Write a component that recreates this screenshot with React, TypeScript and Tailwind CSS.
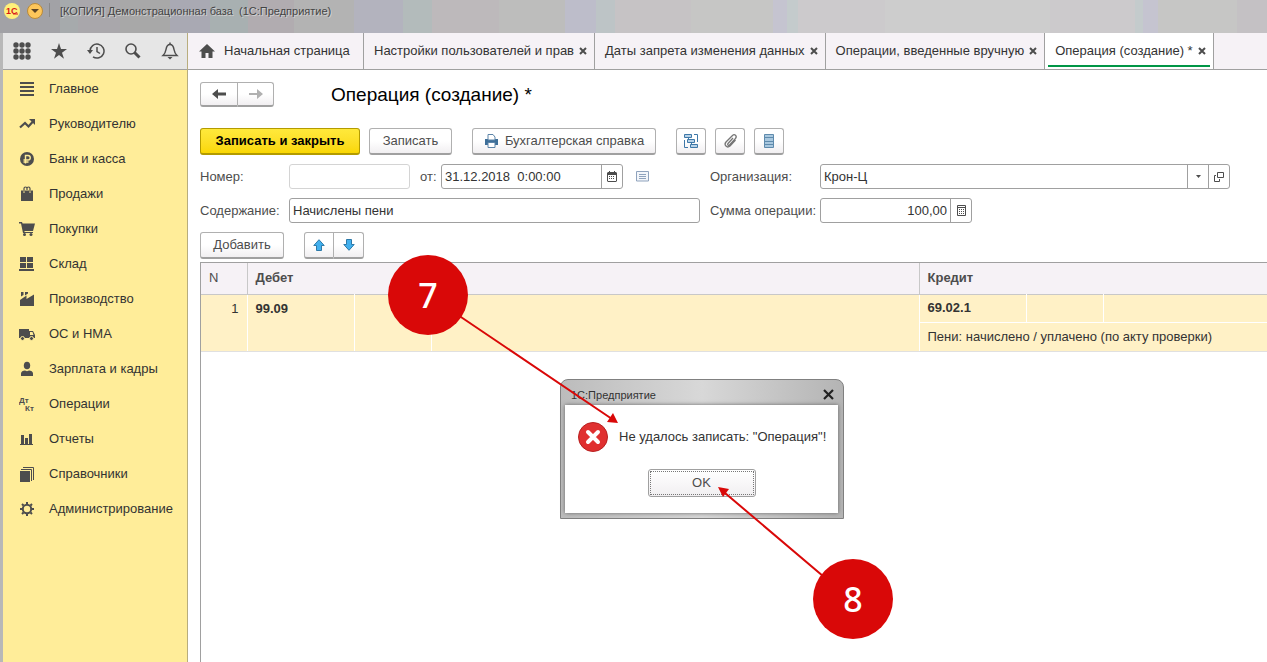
import React from "react";

const NAV = [
  "Главное",
  "Руководителю",
  "Банк и касса",
  "Продажи",
  "Покупки",
  "Склад",
  "Производство",
  "ОС и НМА",
  "Зарплата и кадры",
  "Операции",
  "Отчеты",
  "Справочники",
  "Администрирование",
];

const TABS = [
  "Настройки пользователей и прав",
  "Даты запрета изменения данных",
  "Операции, введенные вручную",
  "Операция (создание) *",
];

// Title bar bands: share of the width, colour
const STRIPES = [
  [60, "#a2a2a6"],
  [18, "#a6aaac"],
  [42, "#a9a7ab"],
  [50, "#a8a8a8"],
  [40, "#a9a9b3"],
  [38, "#a8b0b1"],
  [46, "#b1acb0"],
  [60, "#b3b3b3"],
  [49, "#b3b3be"],
  [29, "#b3bbbb"],
  [67, "#bdb9bb"],
  [66, "#bdbdbc"],
  [31, "#bdbdca"],
  [19, "#bdc4c6"],
  [76, "#c6c3c5"],
  [82, "#c6c6c5"],
  [14, "#c5c4d0"],
  [11, "#c4cbcc"],
  [87, "#cccacc"],
  [165, "#cdcdcd"],
  [85, "#cccacc"],
  [8, "#c4cbcc"],
  [15, "#c5c4d0"],
  [79, "#c6c6c5"],
  [30, "#c4c1c4"],
] as const;

const NAV_ICONS: Record<string, React.ReactNode> = {
  "Главное": <path d="M1 1h14v2H1zM1 5h14v2H1zM1 9h14v2H1zM1 13h14v2H1z" />,
  "Руководителю": (
    <>
      <path d="M1 11.500l5-4.500 3.500 3.500 4.500-5" fill="none" stroke="currentColor" strokeWidth="2.200" />
      <path d="M10 3h6v6z" />
    </>
  ),
  "Банк и касса": (
    <>
      <circle cx="8" cy="8" r="7" />
      <path d="M6.500 12.500V4.500h2.500a2.200 2.200 0 0 1 0 4.500H4.500M4.500 11h5" fill="none" stroke="#ffed99" strokeWidth="1.400" />
    </>
  ),
  "Продажи": (
    <>
      <path d="M2 4.500h2v2h2v-2h4v2h2v-2h2V15H2z" />
      <path d="M5 6V2.500a1.500 1.500 0 0 1 3 0a1.500 1.500 0 0 1 3 0V6M8 2.500V4" fill="none" stroke="currentColor" strokeWidth="1.200" />
    </>
  ),
  "Покупки": (
    <>
      <path d="M0 1h3l.6 1.500H16l-2 7.500H5.500v1H14v1H4L2 2.500H0z" />
      <circle cx="5.500" cy="13.500" r="1.500" />
      <circle cx="12" cy="13.500" r="1.500" />
    </>
  ),
  "Склад": <path d="M1 1h6v5H1zM8 1h6v5H8zM1 7h6v5H1zM8 7h6v5H8zM0 13h15v2H0z" />,
  "Производство": <path d="M2 1h2.500v3L2 5.500zM6 1h3v1.500L6 4.500zM1 9l6.500-4.500V8L15 3.500V15H1z" />,
  "ОС и НМА": (
    <>
      <path fillRule="evenodd" d="M0 3h10v9H0zM10 5h4l2 4v3h-6zM11 6v3h3.500L13.500 6z" />
      <circle cx="3.500" cy="12.500" r="2" stroke="#ffed99" />
      <circle cx="12.500" cy="12.500" r="2" stroke="#ffed99" />
    </>
  ),
  "Зарплата и кадры": (
    <>
      <ellipse cx="8" cy="4.500" rx="3.200" ry="3.800" />
      <path d="M2 15v-2.500c0-2 2-3 4-3l2 .8 2-.8c2 0 4 1 4 3V15z" />
    </>
  ),
  "Операции": (
    <g fontFamily="Liberation Sans, sans-serif" fontWeight="bold" fontSize="8">
      <text x="0" y="7">Дт</text>
      <text x="6" y="15">Кт</text>
    </g>
  ),
  "Отчеты": <path d="M2 4h3v9h1V7h3v6h1V3h3v10h1v1H1v-1h1z" />,
  "Справочники": (
    <>
      <path d="M1 5h10v11H1z" />
      <path d="M2 3.500h10.500V15M4 1.500h10.500V14" fill="none" stroke="currentColor" />
    </>
  ),
  "Администрирование": (
    <>
      <circle cx="8" cy="8" r="4.200" fill="none" stroke="currentColor" strokeWidth="2" />
      <g stroke="currentColor" strokeWidth="2">
        <path d="M8 1v2M8 13v2M1 8h2M13 8h2M3 3l1.500 1.500M11.500 11.500L13 13M13 3l-1.500 1.500M4.500 11.500L3 13" />
      </g>
    </>
  ),
};

const btn =
  "flex items-center justify-center rounded-[3px] border border-[#b0b0b0] border-b-2 border-b-[#a0a0a0] bg-linear-to-b from-white from-50% to-[#f1eff1] text-[#4d4d4d]";

const field = "h-[25px] rounded-[3px] border border-[#a0a0a0] bg-white text-[#333]";

function TitleBar() {
  return (
    <header className="grid h-[33px] text-[11px] text-[#444]">
      <div className="col-start-1 row-start-1 flex">
        {STRIPES.map(([share, color], i) => (
          <span key={i} style={{ flexGrow: share, backgroundColor: color }} />
        ))}
      </div>
      <div className="col-start-1 row-start-1 flex items-start pl-1 pt-[3px]">
        <svg width="46" height="16" viewBox="0 0 46 16">
          <circle cx="8" cy="8" r="8" fill="#fff07a" />
          <text x="2" y="11" fontFamily="Liberation Sans, sans-serif" fontWeight="bold" fontSize="9" fill="#d81818">1С</text>
          <path d="M9 11h5" stroke="#d81818" />
          <circle cx="31" cy="8" r="7.500" fill="#fdc65a" stroke="#b98a3a" />
          <path d="M27 6h8l-4 4z" fill="#5c4424" />
          <path d="M45.500 0v14" stroke="#888" />
        </svg>
        <span className="pl-2.5 whitespace-pre text-shadow-[1px_1px_0_#d0d0d0]">
          [КОПИЯ] Демонстрационная база  (1С:Предприятие)
        </span>
      </div>
    </header>
  );
}

function HeaderTools() {
  return (
    <div className="flex h-[37px] items-center justify-between border-b border-[#a0a0a0] bg-[#e6e6e6] pl-2.5 pr-2 text-[#4d4d4d]">
      <button aria-label="Меню функций">
        <svg width="18" height="18" viewBox="0 0 18 18" fill="currentColor">
          {[3, 9, 15].map((y) => [3, 9, 15].map((x) => <circle key={`${x}-${y}`} cx={x} cy={y} r="2.700" />))}
        </svg>
      </button>
      <button aria-label="Избранное">
        <svg width="18" height="18" viewBox="0 0 18 18" fill="currentColor">
          <path d="M9 1l2 6h6l-5 3.700 2 6L9 13l-5 3.700 2-6L1 7h6z" />
        </svg>
      </button>
      <button aria-label="История">
        <svg width="18" height="18" viewBox="0 0 18 18" fill="none" stroke="currentColor" strokeWidth="1.500">
          <path d="M3 9a7 7 0 1 1 3 5.800M10 5v4.500l3 2" />
          <path d="M0 8h6l-3 4z" fill="currentColor" stroke="none" />
        </svg>
      </button>
      <button aria-label="Поиск">
        <svg width="18" height="18" viewBox="0 0 18 18" fill="none" stroke="currentColor">
          <circle cx="7" cy="7" r="5" strokeWidth="1.600" />
          <path d="M10.500 10.500l5 5" strokeWidth="3" />
        </svg>
      </button>
      <button aria-label="Оповещения">
        <svg width="18" height="18" viewBox="0 0 18 18" fill="none" stroke="currentColor" strokeWidth="1.500">
          <path d="M2 13.500c2-2 2.500-3 3-6C5.500 4 7 2.500 9 2.500s3.500 1.500 4 5c.5 3 1 4 3 6z" />
          <path d="M9 2.500V.5" />
          <path d="M6.500 15h5L9 17.500z" fill="currentColor" stroke="none" />
        </svg>
      </button>
    </div>
  );
}

function Sidebar() {
  return (
    <aside className="flex w-[185px] shrink-0 flex-col border-r border-[#b8ad7d] bg-[#ffed99]">
      <HeaderTools />
      <nav className="flex flex-col pt-px">
        {NAV.map((name) => (
          <a key={name} href="#" className="flex h-[35px] items-center gap-3.5 pl-4 text-[#333]">
            <svg className="shrink-0 text-[#4d4d4d]" width="16" height="16" viewBox="0 0 16 16" fill="currentColor">
              {NAV_ICONS[name]}
            </svg>
            {name}
          </a>
        ))}
      </nav>
    </aside>
  );
}

function CloseIcon() {
  return (
    <svg width="8" height="8" viewBox="0 0 8 8" stroke="currentColor" strokeWidth="2">
      <path d="M1 1l6 6M7 1L1 7" />
    </svg>
  );
}

function TabBar() {
  return (
    <div className="flex h-[37px] border-b border-[#a0a0a0] bg-[#f6f2f6] text-[#333]">
      <button className="flex w-[176px] items-center gap-[9px] border-r border-[#a0a0a0] pl-[11px]">
        <svg width="16" height="14" viewBox="0 0 16 14" fill="#4d4d4d">
          <path d="M8 0l8 7.500h-2.500V14H9.500V9h-3v5h-4V7.500H0z" />
        </svg>
        Начальная страница
      </button>
      {TABS.map((name, i) => {
        const active = i === TABS.length - 1;
        return (
          <div key={name} className={`border-r border-[#a0a0a0] px-[3px] ${active ? "bg-white" : ""}`}>
            <div className={`flex h-[34px] items-center gap-[5px] border-b-2 pt-1 pr-1 pl-[7px] ${active ? "border-[#009646]" : "border-transparent"}`}>
              <button className="whitespace-nowrap">{name}</button>
              <button aria-label="Закрыть" className="text-[#4d4d4d]">
                <CloseIcon />
              </button>
            </div>
          </div>
        );
      })}
    </div>
  );
}

function Toolbar() {
  return (
    <div className="mt-[21px] flex h-[27px]">
      <button className="mr-[9px] w-[160px] rounded-[3px] border border-[#b39b00] border-b-2 bg-linear-to-b from-[#ffe93b] to-[#fad700] font-bold text-black">
        Записать и закрыть
      </button>
      <button className={`${btn} mr-5 w-[83px]`}>Записать</button>
      <button className={`${btn} mr-5 w-[184px] gap-1.5`}>
        <svg width="15" height="14" viewBox="0 0 15 14">
          <path d="M1 5h13v6H1z" fill="#3e6f99" />
          <path d="M4 6V.5h5L11 3v3zM4 8.500h7v5H4z" fill="#fff" stroke="#5c84a8" />
        </svg>
        Бухгалтерская справка
      </button>
      <div className="flex gap-[9px]">
        <button aria-label="Структура подчиненности" className={`${btn} w-[30px]`}>
          <svg width="16" height="16" viewBox="0 0 16 16" fill="#b9d3e8" stroke="#3e78a8">
            <path d="M1.500 1.500h7v3h-7zM4.500 6.500h7v3h-7zM7.500 11.500h7v3h-7z" />
            <path d="M11 1.500h3.500V9M1.500 7v7.500H5M5.500 4.500v2M8.500 9.500v2" fill="none" />
          </svg>
        </button>
        <button aria-label="Присоединенные файлы" className={`${btn} w-[30px]`}>
          <svg width="16" height="16" viewBox="0 0 16 16" fill="none" stroke="#777" strokeWidth="1.300">
            <path d="M11 5l-5 5.500c-1 1.200.3 2.500 1.500 1.500l6-6.500c2-2.500-1-5-3-3L4 9c-2.500 3 1 6.500 4 4l5.500-6" />
          </svg>
        </button>
        <button aria-label="Список" className={`${btn} w-[30px]`}>
          <svg width="12" height="16" viewBox="0 0 12 16" fill="#a9c8df" stroke="#5f8bad">
            <path d="M1.500 1.500h9v13h-9zM1 4.500h10M1 8.500h10M1 11.500h10" />
          </svg>
        </button>
      </div>
    </div>
  );
}

function OperationForm() {
  return (
    <form className="mt-[9px] flex flex-col gap-[9px] pr-[37px] text-[#4d4d4d]">
      <div className="flex items-center">
        <label htmlFor="number" className="w-[89px]">Номер:</label>
        <input id="number" className="h-[25px] w-[121px] rounded-[3px] border border-[#d4d4d4] px-[3px]" />
        <label htmlFor="date" className="w-[31px] pl-2.5">от:</label>
        <div className={`${field} flex w-[182px]`}>
          <input id="date" defaultValue="31.12.2018  0:00:00" className="w-[160px] border-r border-[#a0a0a0] px-[3px] whitespace-pre" />
          <button type="button" aria-label="Календарь" className="flex flex-1 items-center justify-center">
            <svg width="10" height="11" viewBox="0 0 10 11" fill="#4d4d4d">
              <path fillRule="evenodd" d="M1 1h1V0h1v1h4V0h1v1h1l1 1v8l-1 1H1l-1-1V2zM1 4v6h8V4z" />
              <path d="M2 5h1v1H2zM4 5h1v1H4zM6 5h1v1H6zM2 7h1v1H2zM4 7h1v1H4zM6 7h1v1H6z" />
            </svg>
          </button>
        </div>
        <button type="button" aria-label="Комментарий" className="w-[87px] pl-[13px]">
          <svg width="13" height="11" viewBox="0 0 13 11" fill="#f3f6fa" stroke="#8fa3bd">
            <path d="M.5.5h12v9.500H.5zM3 3.500h7M3 5.500h7M3 7.500h7" />
          </svg>
        </button>
        <label htmlFor="org" className="w-[110px] shrink-0">Организация:</label>
        <div className={`${field} flex flex-1`}>
          <div className="relative flex-1">
            <select id="org" className="h-full w-full appearance-none pl-[3px]">
              <option>Крон-Ц</option>
            </select>
            <span className="pointer-events-none absolute inset-y-0 right-0 flex w-[21px] items-center justify-center border-l border-[#a0a0a0]">
              <svg width="5" height="3" viewBox="0 0 5 3" fill="#4d4d4d">
                <path d="M0 0h5L2.500 3z" />
              </svg>
            </span>
          </div>
          <button type="button" aria-label="Открыть" className="flex w-[21px] items-center justify-center border-l border-[#a0a0a0]">
            <svg width="10" height="10" viewBox="0 0 10 10" fill="none" stroke="#4d4d4d">
              <path d="M3.500.5h6v5h-6zM2 3.500H.5v6h5V7" />
            </svg>
          </button>
        </div>
      </div>
      <div className="flex items-center">
        <label htmlFor="content" className="w-[89px]">Содержание:</label>
        <input id="content" defaultValue="Начислены пени" className={`${field} mr-2.5 w-[411px] px-[3px]`} />
        <label htmlFor="sum" className="w-[110px] whitespace-nowrap">Сумма операции:</label>
        <div className={`${field} flex w-[152px]`}>
          <input id="sum" defaultValue="100,00" className="w-[130px] border-r border-[#a0a0a0] px-[3px] text-right" />
          <button type="button" aria-label="Калькулятор" className="flex flex-1 items-center justify-center">
            <svg width="9" height="11" viewBox="0 0 9 11" fill="none" stroke="#4d4d4d">
              <path d="M.5.5h8v10h-8zM0 2.500h9" />
              <path d="M2 4.500h5M2 6.500h5M2 8.500h5" strokeDasharray="1 1" />
            </svg>
          </button>
        </div>
      </div>
    </form>
  );
}

function EntriesTable() {
  return (
    <div className="mt-[3px] flex-1 border-l border-t border-[#a0a0a0]">
      <table className="w-full table-fixed border-collapse text-left text-[#333]">
        <colgroup>
          <col className="w-[46px]" />
          <col className="w-[107px]" />
          <col className="w-[77px]" />
          <col className="w-[488px]" />
          <col className="w-[107px]" />
          <col className="w-[77px]" />
          <col />
        </colgroup>
        <thead>
          <tr className="h-[31px] border-b border-[#c8c8c8] bg-[#f6f2f6] text-[#4d4d4d]">
            <th className="border-r border-[#c8c8c8] pl-2 font-normal">N</th>
            <th colSpan={3} className="border-r border-[#c8c8c8] pl-2">Дебет</th>
            <th colSpan={3} className="pl-2">Кредит</th>
          </tr>
        </thead>
        <tbody className="bg-[#fff1c6]">
          <tr className="h-7">
            <td rowSpan={2} className="border-r border-b border-white border-b-[#e0e0e0] pt-1.5 pr-2 text-right align-top">1</td>
            <td rowSpan={2} className="border-r border-b border-white border-b-[#e0e0e0] pt-1.5 pl-2 align-top font-bold">99.09</td>
            <td rowSpan={2} className="border-r border-b border-white border-b-[#e0e0e0]" />
            <td rowSpan={2} className="border-r border-b border-white border-b-[#e0e0e0]" />
            <td className="border-r border-b border-white pl-2 font-bold">69.02.1</td>
            <td className="border-r border-b border-white" />
            <td className="border-b border-white" />
          </tr>
          <tr className="h-[29px]">
            <td colSpan={3} className="border-b border-[#e0e0e0] pl-2">
              Пени: начислено / уплачено (по акту проверки)
            </td>
          </tr>
        </tbody>
      </table>
    </div>
  );
}

function ErrorDialog() {
  return (
    <div
      role="alertdialog"
      aria-label="1С:Предприятие"
      className="absolute left-[560px] top-[379px] w-[284px] rounded-t-lg border border-[#808080] bg-linear-to-r from-[#bcbcbc] via-[#d8d8d8] to-[#b4b4b4] pr-[5px] pb-[5px] pl-1"
    >
      <div className="flex h-[25px] items-center justify-between pt-1 pr-1 pl-1.5 text-[11px] text-[#333]">
        1С:Предприятие
        <button aria-label="Закрыть">
          <svg width="11" height="11" viewBox="0 0 11 11" stroke="#222" strokeWidth="2.200">
            <path d="M1 1l9 9M10 1l-9 9" />
          </svg>
        </button>
      </div>
      <div className="bg-white px-[13px] pt-[17px] pb-4 shadow-[0_0_4px_#666]">
        <div className="flex items-center gap-[11px] whitespace-nowrap text-[#333]">
          <svg className="shrink-0" width="30" height="30" viewBox="0 0 30 30">
            <circle cx="15" cy="15" r="14.500" fill="#e03030" stroke="#b82020" />
            <path d="M10 10l10 10M20 10L10 20" stroke="#fff" strokeWidth="4" strokeLinecap="round" />
          </svg>
          Не удалось записать: "Операция"!
        </div>
        <button className="mx-auto mt-[17px] block h-7 w-[108px] rounded-[3px] border border-[#a0a0a0] bg-linear-to-b from-white to-[#f1eff1] p-px text-[13px] text-[#4d4d4d]">
          <span className="flex h-full items-center justify-center border border-dotted border-[#777]">OK</span>
        </button>
      </div>
    </div>
  );
}

function Callouts() {
  const circle =
    "absolute flex size-20 items-center justify-center rounded-full bg-[#d90808] pb-px font-['Noto_Sans','Open_Sans',sans-serif] text-[34px] font-medium text-white";
  return (
    <>
      <svg className="pointer-events-none absolute left-0 top-0" width="1267" height="662" viewBox="0 0 1267 662" fill="#d90808">
        <path d="M455 313L612 419M830 582L725 493" stroke="#d90808" strokeWidth="2" />
        <path d="M618 423l-11-1 6-9zM718 487l11 2-6 8z" />
      </svg>
      <div className={`${circle} left-[388px] top-[255px]`}>7</div>
      <div className={`${circle} left-[813px] top-[559px]`}>8</div>
    </>
  );
}

export default function App() {
  return (
    <div className="relative flex min-h-screen flex-col overflow-hidden bg-white font-['Liberation_Sans',Arial,sans-serif] text-[13px] leading-4">
      <TitleBar />
      <div className="flex flex-1 border-l-[3px] border-[#b8b8b8]">
        <Sidebar />
        <main className="flex min-w-0 flex-1 flex-col">
          <TabBar />
          <div className="flex flex-1 flex-col pl-3 pt-3">
            <div className="flex h-[25px] items-center">
              <div className="flex h-full w-[131px]">
                <button aria-label="Назад" className={`${btn} w-[38px] rounded-r-none`}>
                  <svg width="14" height="10" viewBox="0 0 14 10" fill="#4d4d4d">
                    <path d="M0 5l6-5v3.500h8v3H6V10z" />
                  </svg>
                </button>
                <button aria-label="Вперед" className={`${btn} w-9 rounded-l-none border-l-0`}>
                  <svg width="14" height="10" viewBox="0 0 14 10" fill="#b0b0b0">
                    <path d="M14 5L8 0v4H0v2h8v4z" />
                  </svg>
                </button>
              </div>
              <h1 className="text-[19px] text-black">Операция (создание) *</h1>
            </div>
            <Toolbar />
            <OperationForm />
            <div className="mt-[9px] flex h-[27px] gap-5">
              <button className={`${btn} w-[84px]`}>Добавить</button>
              <div className="flex">
                <button aria-label="Вверх" className={`${btn} w-[30px] rounded-r-none`}>
                  <svg width="12" height="12" viewBox="0 0 12 12" fill="#42b0ee" stroke="#2d79a8">
                    <path d="M6 .7L.8 6.500h2.700v5h5v-5h2.700z" />
                  </svg>
                </button>
                <button aria-label="Вниз" className={`${btn} w-[30px] rounded-l-none border-l-0`}>
                  <svg width="12" height="12" viewBox="0 0 12 12" fill="#42b0ee" stroke="#2d79a8">
                    <path d="M6 11.300L.8 5.500h2.700v-5h5v5h2.700z" />
                  </svg>
                </button>
              </div>
            </div>
            <EntriesTable />
          </div>
        </main>
      </div>
      <ErrorDialog />
      <Callouts />
    </div>
  );
}
